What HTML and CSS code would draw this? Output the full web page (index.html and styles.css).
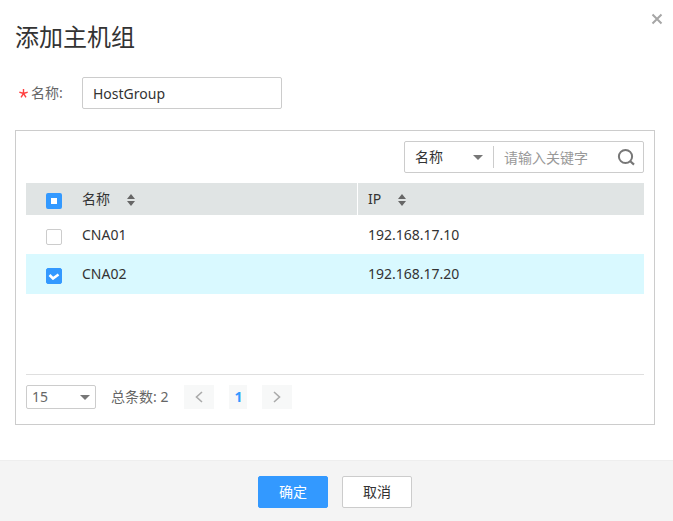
FILE: index.html
```html
<!DOCTYPE html>
<html lang="zh-CN">
<head>
<meta charset="utf-8">
<meta name="viewport" content="width=device-width, initial-scale=1">
<title>添加主机组</title>
<link rel="stylesheet" href="styles.css">
</head>
<body>
<form class="dialog">
  <button class="close" type="button" aria-label="关闭">
    <svg width="12" height="12" viewBox="0 0 12 12"><path d="M1.500 1.500l9 9M10.500 1.500l-9 9" stroke="#a6a6a6" stroke-width="2" fill="none"/></svg>
  </button>
  <main class="content">
    <h1 class="title">添加主机组</h1>
    <div class="field">
      <label class="field-label" for="group-name"><svg class="required" width="9" height="9" viewBox="0 0 9 9" aria-hidden="true"><path d="M4.500 0v4.500M4.500 4.500L.3 3.100M4.500 4.500l4.200-1.400M4.500 4.500L2 8.300M4.500 4.500L7 8.300" stroke="#ff4040" stroke-width="1.400" fill="none"/></svg>名称:</label>
      <input class="field-input" id="group-name" type="text" value="HostGroup">
    </div>
    <section class="panel">
      <div class="search">
        <select class="search-type" aria-label="搜索类型"><option>名称</option></select>
        <input class="search-input" type="text" placeholder="请输入关键字" aria-label="关键字">
        <button class="search-button" type="button" aria-label="搜索">
          <svg width="18" height="18" viewBox="0 0 18 18"><circle cx="8.500" cy="8.500" r="6.600" stroke="#777" stroke-width="2" fill="none"/><path d="M13 13l4 3.600" stroke="#777" stroke-width="2.200"/></svg>
        </button>
      </div>
      <div class="table-area">
        <table class="hosts">
          <colgroup><col class="col-check"><col class="col-name"><col></colgroup>
          <thead>
            <tr>
              <th class="check-cell"><input class="check check-some" type="checkbox" aria-label="全选"></th>
              <th class="name-head">名称<button class="sort" type="button" aria-label="按名称排序"><svg width="8" height="12" viewBox="0 0 8 12"><path d="M4 0l4 5H0zM4 12L0 7h8z" fill="#666"/></svg></button></th>
              <th>IP<button class="sort" type="button" aria-label="按IP排序"><svg width="8" height="12" viewBox="0 0 8 12"><path d="M4 0l4 5H0zM4 12L0 7h8z" fill="#666"/></svg></button></th>
            </tr>
          </thead>
          <tbody>
            <tr>
              <td class="check-cell"><input class="check" type="checkbox" aria-label="CNA01"></td>
              <td>CNA01</td>
              <td>192.168.17.10</td>
            </tr>
            <tr class="selected">
              <td class="check-cell"><input class="check" type="checkbox" aria-label="CNA02" checked></td>
              <td>CNA02</td>
              <td>192.168.17.20</td>
            </tr>
          </tbody>
        </table>
      </div>
      <nav class="pager" aria-label="分页">
        <select class="page-size" aria-label="每页条数"><option>15</option></select>
        <span class="total">总条数: 2</span>
        <button class="page-button" type="button" aria-label="上一页"><svg width="8" height="12" viewBox="0 0 8 12"><path d="M7 1L1.500 6 7 11" stroke="#aaa" stroke-width="1.600" fill="none"/></svg></button>
        <button class="page-button page-current" type="button" aria-current="page">1</button>
        <button class="page-button" type="button" aria-label="下一页"><svg width="8" height="12" viewBox="0 0 8 12"><path d="M1 1l5.500 5L1 11" stroke="#aaa" stroke-width="1.600" fill="none"/></svg></button>
      </nav>
    </section>
  </main>
  <footer class="actions">
    <button class="button button-primary" type="submit">确定</button>
    <button class="button" type="button">取消</button>
  </footer>
</form>
</body>
</html>
```

FILE: styles.css
```css
* {
  box-sizing: border-box;
}

body {
  margin: 0;
  background: #fff;
  color: #333;
  font: 14px/20px "Noto Sans", "Noto Sans CJK SC", sans-serif;
}

button,
input,
select {
  margin: 0;
  padding: 0;
  border: 0;
  background: none;
  color: inherit;
  font: inherit;
}

svg {
  display: block;
}

.dialog {
  position: relative;
  display: flex;
  flex-direction: column;
  min-height: 100vh;
}

.close {
  position: absolute;
  top: 9px;
  right: 6px;
  padding: 4px;
}

.content {
  flex: 1;
  padding: 20px 18px 35px 15px;
}

.title {
  margin: 0 0 24px;
  font-size: 24px;
  line-height: 33px;
  font-weight: 400;
}

.field {
  display: flex;
  align-items: center;
  margin-bottom: 21px;
}

.field-label {
  display: flex;
  align-items: center;
  gap: 3px;
  width: 67px;
  padding-left: 4px;
  color: #666;
}

.field-input {
  width: 200px;
  height: 32px;
  padding: 0 10px;
  border: 1px solid #ccc;
  border-radius: 2px;
}

.panel {
  display: flex;
  flex-direction: column;
  gap: 10px;
  padding: 10px 10px 15px;
  border: 1px solid #ccc;
}

.search {
  display: flex;
  align-items: center;
  align-self: flex-end;
  width: 240px;
  height: 32px;
  border: 1px solid #ccc;
  border-radius: 2px;
}

.search-type,
.page-size {
  appearance: none;
  background: url("data:image/svg+xml,%3Csvg xmlns='http://www.w3.org/2000/svg' width='10' height='5'%3E%3Cpath d='M0 0h10L5 5z' fill='%23777'/%3E%3C/svg%3E") no-repeat right 10px center;
}

.search-type {
  width: 89px;
  height: 22px;
  padding-left: 10px;
  border-right: 1px solid #ccc;
}

.search-input {
  flex: 1;
  min-width: 0;
  height: 30px;
  padding-left: 10px;
}

.search-input::placeholder {
  color: #999;
}

.search-button {
  padding: 0 8px;
}

.table-area {
  min-height: 192px;
  border-bottom: 1px solid #dfdfdf;
}

.hosts {
  width: 100%;
  border-collapse: collapse;
  table-layout: fixed;
}

.col-check {
  width: 46px;
}

.col-name {
  width: 286px;
}

.hosts th,
.hosts td {
  padding: 0 10px;
  text-align: left;
  font-weight: 400;
}

.hosts th {
  height: 32px;
  background: #e0e4e4;
}

.hosts td {
  height: 39px;
}

.hosts .selected td {
  height: 40px;
  background: #d9f9ff;
}

.hosts .name-head {
  background: linear-gradient(#fff, #fff) no-repeat right / 1px 100% #e0e4e4;
}

.hosts .check-cell {
  padding: 4px 0 0 20px;
}

.sort {
  margin-left: 17px;
  vertical-align: middle;
}

.check {
  display: block;
  appearance: none;
  width: 16px;
  height: 16px;
  border: 1px solid #ccc;
  border-radius: 2px;
  background: #fff;
}

.check-some {
  border: 5px solid #39f;
}

.check:checked {
  border-color: #39f;
  background: #39f url("data:image/svg+xml,%3Csvg xmlns='http://www.w3.org/2000/svg' width='12' height='8'%3E%3Cpath d='M1.500 3L5 6.500l5.500-4' fill='none' stroke='white' stroke-width='2.600'/%3E%3C/svg%3E") no-repeat center;
}

.pager {
  display: flex;
  align-items: center;
  color: #666;
}

.page-size {
  width: 70px;
  height: 24px;
  padding-left: 5px;
  border: 1px solid #ccc;
  border-radius: 2px;
  background-position: right 5px center;
}

.total {
  margin: 0 16px 0 15px;
}

.page-button {
  display: flex;
  align-items: center;
  justify-content: center;
  width: 30px;
  height: 24px;
  background: #f7f8f8;
}

.page-current {
  width: 18px;
  margin: 0 15px;
  color: #39f;
  font-weight: 700;
}

.actions {
  display: flex;
  justify-content: center;
  gap: 14px;
  padding: 15px 18px 13px 15px;
  border-top: 1px solid #eee;
  background: #f4f4f4;
}

.button {
  width: 70px;
  height: 32px;
  border: 1px solid #ccc;
  border-radius: 2px;
  background: #fff;
}

.button-primary {
  border-color: #39f;
  background: #39f;
  color: #fff;
}
```
